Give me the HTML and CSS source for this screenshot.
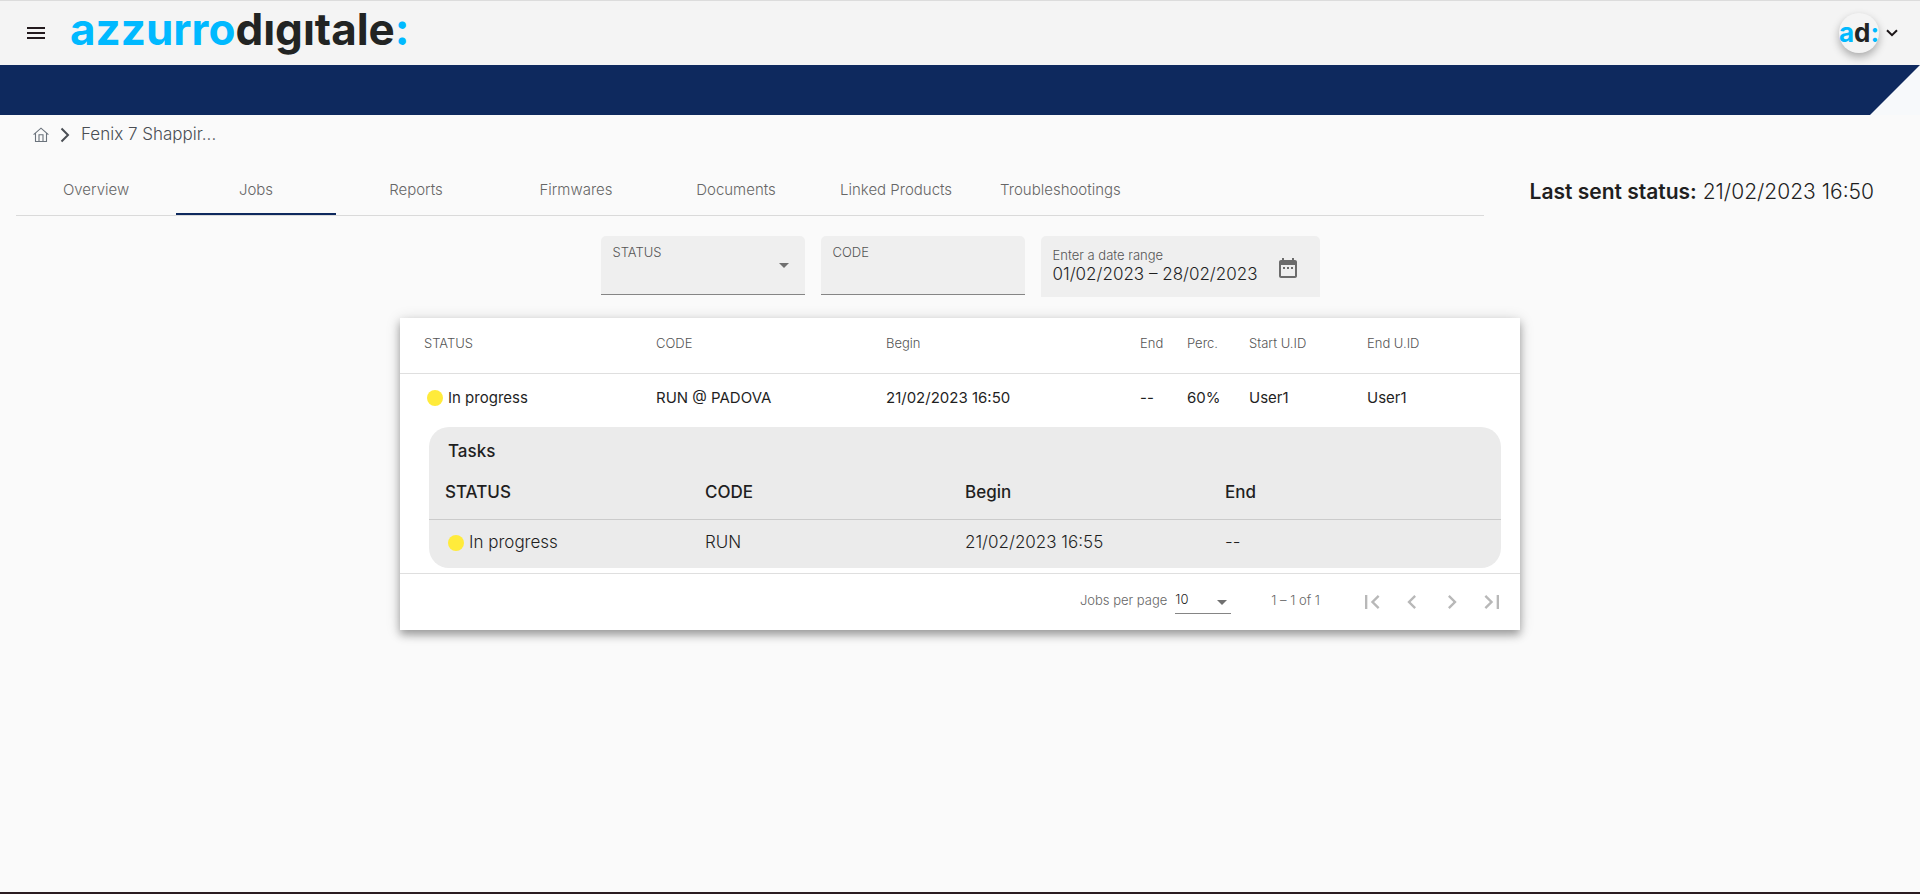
FILE: index.html
```html
<!DOCTYPE html>
<html lang="en">
<head>
<meta charset="utf-8">
<title>Jobs</title>
<link rel="stylesheet" href="styles.css">
</head>
<body>
<header class="topbar">
  <button class="icon-btn menu-btn" type="button" aria-label="Menu">
    <svg width="24" height="24" viewBox="0 0 24 24"><path d="M3 18h18v-2H3v2zm0-5h18v-2H3v2zm0-7v2h18V6H3z" fill="#231a1e"/></svg>
  </button>
  <a class="logo" href="#"><span class="azure">azzurro</span>dıgıtale<span class="azure">:</span></a>
  <button class="profile" type="button" aria-label="Account">
    <span class="avatar"><span class="azure">a</span>d<span class="azure">:</span></span>
    <svg width="12" height="8" viewBox="0 0 12 8"><path d="M1 1.2l5 5 5-5" fill="none" stroke="#1c1618" stroke-width="2"/></svg>
  </button>
</header>
<div class="banner"><div class="banner-fill"></div></div>
<main class="content">
  <nav class="breadcrumb" aria-label="Breadcrumb">
    <a class="home" href="#" aria-label="Home">
      <svg width="16" height="16" viewBox="0 0 16 16" fill="none" stroke="#6b737c" stroke-width="1.1"><path d="M.6 7.600L8 1.200l7.400 6.400M2.500 6.300v8.200h11V6.300M6 14.500V7.800h4v6.700"/></svg>
    </a>
    <svg width="10" height="16" viewBox="0 0 10 16"><path d="M1.500 1.500L8 8l-6.500 6.500" fill="none" stroke="#4a4e54" stroke-width="2"/></svg>
    <a class="crumb" href="#">Fenix 7 Shappir...</a>
  </nav>
  <div class="tab-row">
    <nav class="tabs" aria-label="Sections">
      <a class="tab" href="#">Overview</a>
      <a class="tab active" href="#" aria-current="page">Jobs</a>
      <a class="tab" href="#">Reports</a>
      <a class="tab" href="#">Firmwares</a>
      <a class="tab" href="#">Documents</a>
      <a class="tab" href="#">Linked Products</a>
      <a class="tab" href="#">Troubleshootings</a>
    </nav>
    <p class="last-status"><strong>Last sent status:</strong> 21/02/2023 16:50</p>
  </div>
  <form class="filters">
    <div class="field">
      <label for="status">STATUS</label>
      <div class="select-wrap">
        <select id="status"><option></option></select>
        <svg class="caret" width="10" height="5" viewBox="0 0 10 5"><path d="M0 0h10L5 5z" fill="#707070"/></svg>
      </div>
    </div>
    <div class="field">
      <label for="code">CODE</label>
      <input id="code" type="text">
    </div>
    <div class="field date-field">
      <div class="date-text">
        <label for="range">Enter a date range</label>
        <input id="range" type="text" value="01/02/2023 – 28/02/2023">
      </div>
      <button class="icon-btn" type="button" aria-label="Open calendar">
        <svg width="24" height="24" viewBox="0 0 24 24"><path d="M7 11h2v2H7zm4 0h2v2h-2zm4 0h2v2h-2zM19 4h-1V2h-2v2H8V2H6v2H5c-1.100 0-2 .9-2 2v14c0 1.100.9 2 2 2h14c1.100 0 2-.9 2-2V6c0-1.100-.9-2-2-2zm0 16H5V9h14z" fill="#6c6c6c"/></svg>
      </button>
    </div>
  </form>
  <section class="card">
    <table class="jobs">
      <colgroup><col class="c-status"><col class="c-code"><col class="c-begin"><col class="c-end"><col class="c-perc"><col class="c-start"><col></colgroup>
      <thead>
        <tr><th>STATUS</th><th>CODE</th><th>Begin</th><th>End</th><th>Perc.</th><th>Start U.ID</th><th>End U.ID</th></tr>
      </thead>
      <tbody>
        <tr class="job">
          <td><span class="state"><span class="dot"></span>In progress</span></td>
          <td>RUN @ PADOVA</td><td>21/02/2023 16:50</td><td>--</td><td>60%</td><td>User1</td><td>User1</td>
        </tr>
        <tr>
          <td class="detail" colspan="7">
            <div class="tasks">
              <h2>Tasks</h2>
              <table>
                <colgroup><col class="t-status"><col class="t-code"><col class="t-begin"><col></colgroup>
                <thead><tr><th>STATUS</th><th>CODE</th><th>Begin</th><th>End</th></tr></thead>
                <tbody><tr><td><span class="state"><span class="dot"></span>In progress</span></td><td>RUN</td><td>21/02/2023 16:55</td><td>--</td></tr></tbody>
              </table>
            </div>
          </td>
        </tr>
      </tbody>
    </table>
    <div class="paginator">
      <label for="per-page">Jobs per page</label>
      <div class="select-wrap page-size">
        <select id="per-page"><option>10</option></select>
        <svg class="caret" width="10" height="5" viewBox="0 0 10 5"><path d="M0 0h10L5 5z" fill="#707070"/></svg>
      </div>
      <span class="range">1 – 1 of 1</span>
      <div class="pager">
        <button class="icon-btn" type="button" disabled aria-label="First page"><svg width="28" height="28" viewBox="0 0 24 24"><path d="M18.410 16.590L13.820 12l4.590-4.590L17 6l-6 6 6 6zM6 6h2v12H6z"/></svg></button>
        <button class="icon-btn" type="button" disabled aria-label="Previous page"><svg width="28" height="28" viewBox="0 0 24 24"><path d="M15.410 7.410L14 6l-6 6 6 6 1.410-1.410L10.830 12z"/></svg></button>
        <button class="icon-btn" type="button" disabled aria-label="Next page"><svg width="28" height="28" viewBox="0 0 24 24"><path d="M10 6L8.590 7.410 13.170 12l-4.580 4.590L10 18l6-6z"/></svg></button>
        <button class="icon-btn" type="button" disabled aria-label="Last page"><svg width="28" height="28" viewBox="0 0 24 24"><path d="M5.590 7.410L10.180 12l-4.590 4.590L7 18l6-6-6-6zM16 6h2v12h-2z"/></svg></button>
      </div>
    </div>
  </section>
</main>
</body>
</html>
```
FILE: styles.css
```css
* { box-sizing: border-box; }
body {
  margin: 0;
  min-height: 100vh;
  display: flex;
  flex-direction: column;
  background: #fafafa;
  color: #1f1f1f;
  font-family: Inter, "Liberation Sans", sans-serif;
  font-size: 15px;
  border-bottom: 2px solid #2b1d22;
}
a { color: inherit; text-decoration: none; }
svg { display: block; }
button, input, select { font: inherit; color: inherit; border: 0; padding: 0; margin: 0; background: none; }
input, select { outline: 0; }
select { appearance: none; width: 100%; }
.icon-btn {
  width: 40px;
  height: 40px;
  display: flex;
  align-items: center;
  justify-content: center;
}
.azure { color: #00b9ff; }

.topbar {
  height: 65px;
  display: flex;
  align-items: center;
  padding: 0 16px;
  background: #f4f4f4;
  border-top: 1px solid #dcdcdc;
}
.logo {
  margin-left: 14px;
  padding-bottom: 8px;
  color: #222423;
  font-size: 44px;
  font-weight: 700;
  line-height: 56px;
}
.profile {
  margin-left: auto;
  display: flex;
  align-items: center;
  gap: 7px;
  padding-right: 6px;
}
.avatar {
  width: 40px;
  height: 40px;
  border-radius: 50%;
  background: #f4f4f4;
  box-shadow: 0 4px 8px rgba(0, 0, 0, .3);
  color: #222423;
  font-size: 26px;
  font-weight: 700;
  line-height: 40px;
  text-align: center;
}
.banner { background: #f7f9fb; }
.banner-fill {
  height: 50px;
  background: #0e295e;
  clip-path: polygon(0 0, 100% 0, calc(100% - 50px) 100%, 0 100%);
}

.content { padding: 0 16px; }
.breadcrumb {
  height: 40px;
  display: flex;
  align-items: center;
  gap: 11px;
  padding: 0 17px;
  color: #4a4e54;
}
.crumb { padding-bottom: 2px; font-size: 17px; font-weight: 300; }

.tab-row {
  display: flex;
  justify-content: space-between;
  align-items: center;
  margin-top: 12px;
  padding-right: 30px;
}
.tabs {
  flex: 0 0 79%;
  display: flex;
  border-bottom: 1px solid #dadada;
}
.tab {
  min-width: 160px;
  height: 48px;
  padding: 0 24px;
  line-height: 46px;
  text-align: center;
  white-space: nowrap;
  font-weight: 300;
  color: #666;
}
.tab.active { border-bottom: 2px solid #0e295e; }
.last-status { margin: 0; font-size: 21px; font-weight: 300; white-space: nowrap; }
.last-status strong { font-weight: 600; }

.filters {
  display: flex;
  justify-content: center;
  align-items: flex-start;
  gap: 16px;
  margin-top: 20px;
}
.field {
  width: 204px;
  height: 59px;
  padding: 8px 12px 0;
  background: #efefef;
  border-bottom: 1px solid #858585;
  border-radius: 5px 5px 0 0;
}
.field label {
  display: block;
  font-size: 13px;
  font-weight: 300;
  line-height: 16px;
  color: #555;
}
.field input { width: 100%; height: 24px; }
.select-wrap { position: relative; }
.field .select-wrap { height: 24px; }
.caret { position: absolute; right: 4px; top: 3px; pointer-events: none; }
.date-field {
  width: 279px;
  height: 61px;
  display: flex;
  justify-content: space-between;
  align-items: center;
  padding: 2px 12px 0;
  border-bottom: 0;
}
.date-text { flex: 1; padding-bottom: 4px; }
.date-field input { display: block; font-size: 17px; font-weight: 300; height: 22px; }

.card {
  width: 1120px;
  max-width: 100%;
  margin: 21px auto 0;
  background: #fff;
  box-shadow: 0 5px 8px rgba(0, 0, 0, .3), 0 2px 14px rgba(0, 0, 0, .16);
}
table { width: 100%; border-collapse: separate; border-spacing: 0; table-layout: fixed; }
th, td { padding: 0; text-align: left; }
.jobs > thead th {
  height: 56px;
  padding-bottom: 5px;
  font-size: 13px;
  font-weight: 300;
  color: #555;
  border-bottom: 1px solid #dfdfdf;
}
.jobs > thead th:first-child, .job td:first-child { padding-left: 24px; }
.job td { height: 47px; padding-bottom: 1px; }
.c-status { width: 256px; }
.c-code { width: 230px; }
.c-begin { width: 254px; }
.c-end { width: 47px; }
.c-perc { width: 62px; }
.c-start { width: 118px; }
.state { display: flex; align-items: center; gap: 5px; padding-left: 3px; }
.dot { width: 16px; height: 16px; margin-top: 2px; border-radius: 50%; background: #ffeb3b; }
.detail { padding: 6px 19px 5px 29px; border-bottom: 1px solid #dfdfdf; }
.tasks {
  overflow: hidden;
  padding-top: 12px;
  border-radius: 20px;
  background: #ebebeb;
  font-size: 17px;
  font-weight: 300;
}
.tasks h2 { margin: 0 0 0 19px; font-size: 17px; line-height: 24px; font-weight: 500; }
.tasks th { height: 57px; padding-top: 1px; font-weight: 500; border-bottom: 1px solid #cbcbcb; }
.tasks td { height: 48px; padding-bottom: 4px; }
.tasks th:first-child, .tasks td:first-child { padding-left: 16px; }
.t-status { width: 276px; }
.t-code, .t-begin { width: 260px; }

.paginator {
  height: 56px;
  display: flex;
  align-items: center;
  justify-content: flex-end;
  padding-right: 8px;
  font-size: 13px;
  color: #666;
  font-weight: 300;
}
.paginator label, .range { padding-bottom: 4px; }
.page-size {
  width: 56px;
  height: 28px;
  margin: 0 40px 4px 8px;
  border-bottom: 1px solid #858585;
  color: #1f1f1f;
}
.page-size select { display: block; height: 26px; }
.page-size .caret { top: 14px; }
.pager { display: flex; margin-left: 32px; }
.pager svg { fill: #b8b8b8; }
```
